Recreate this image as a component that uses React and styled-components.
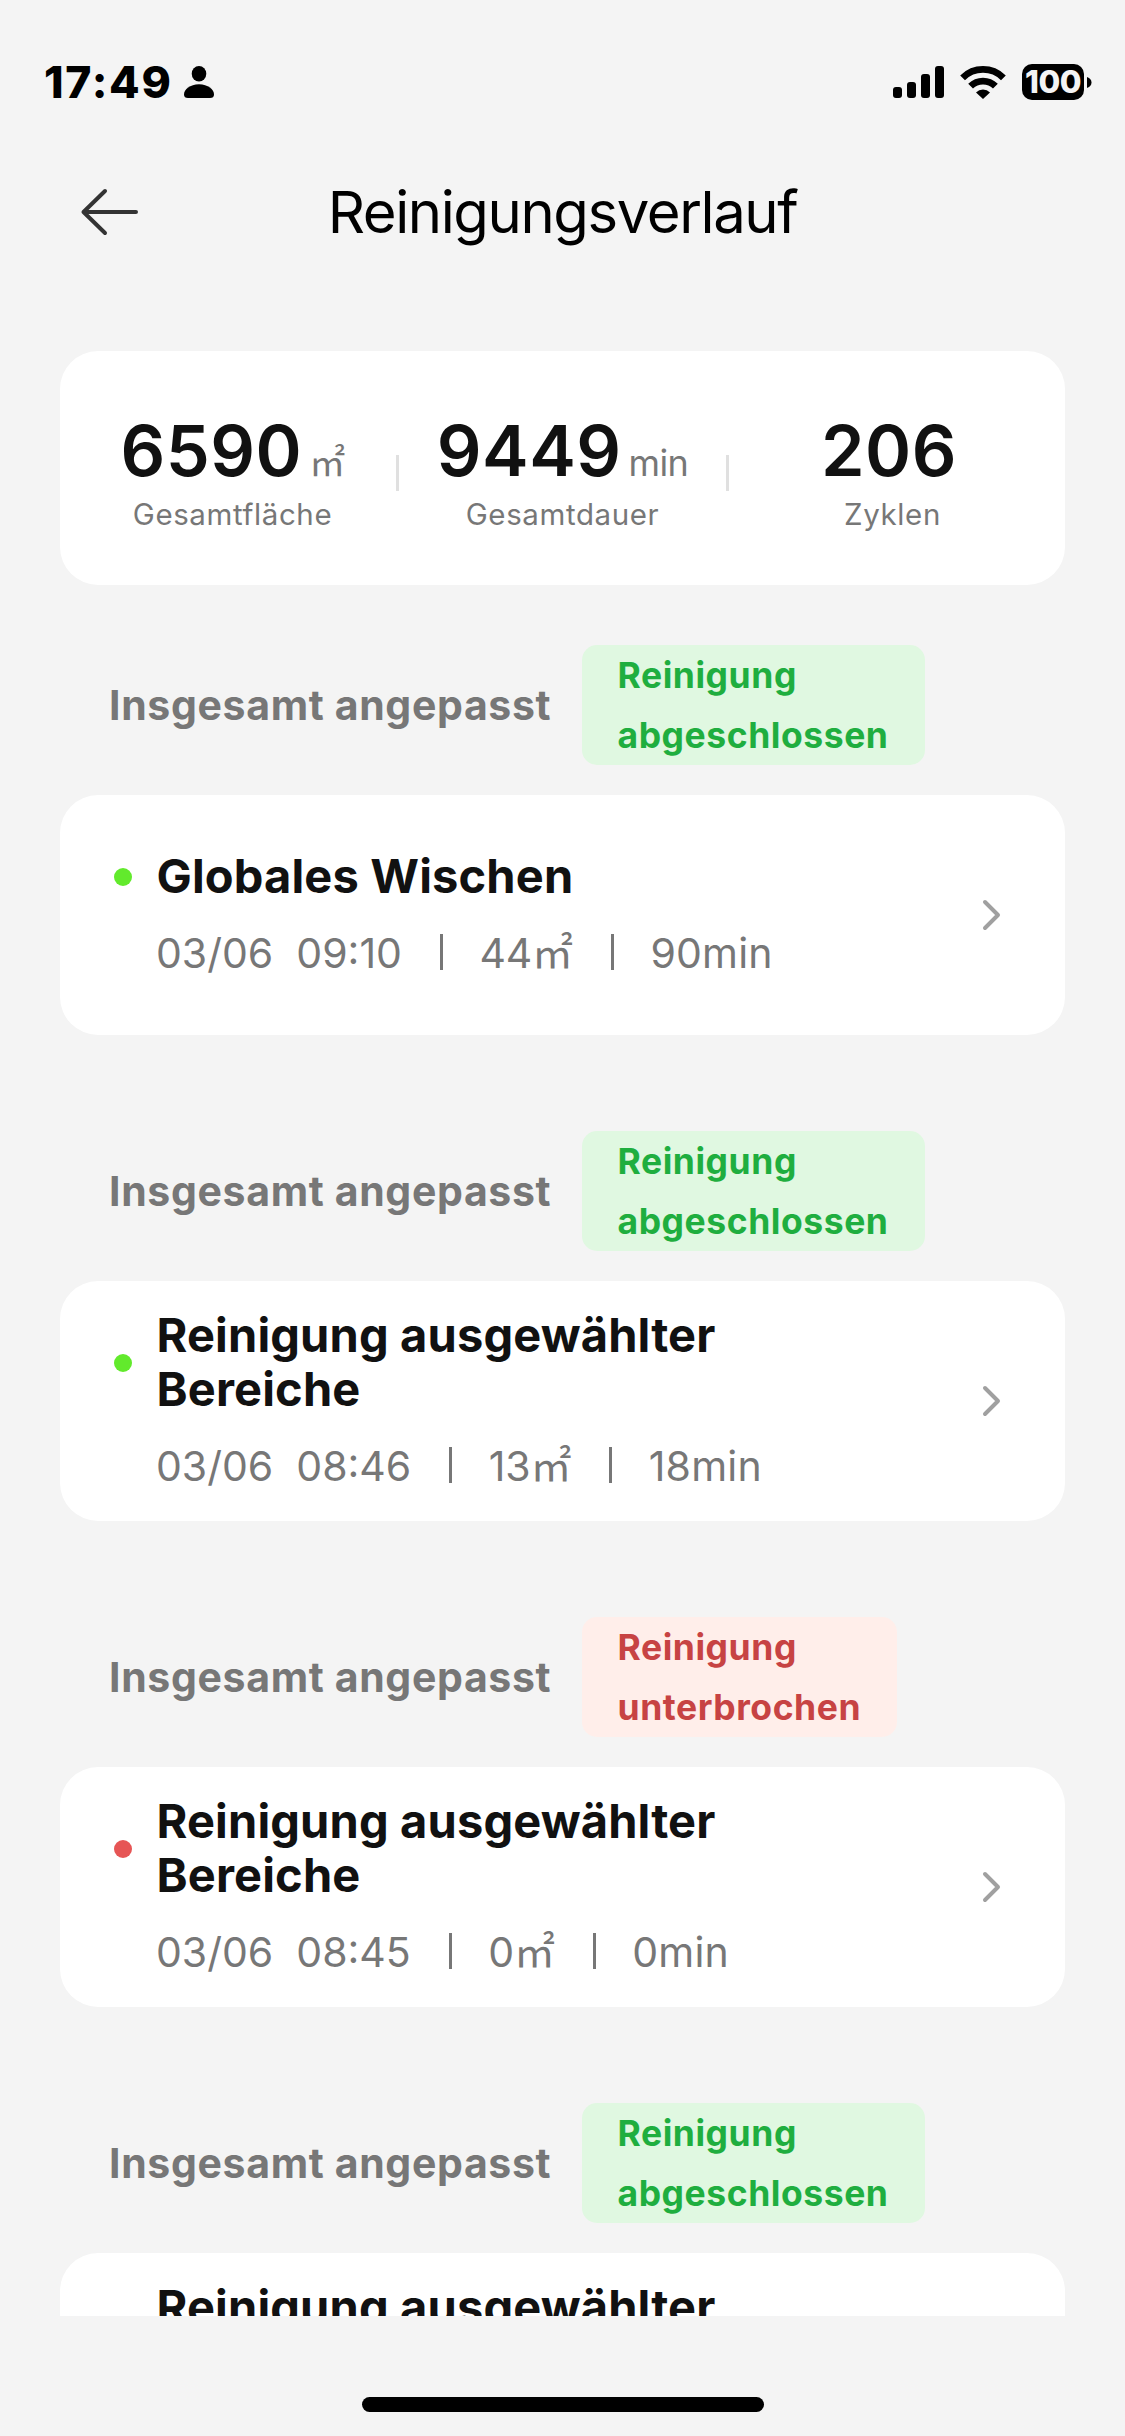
import React from 'react'
import styled, { createGlobalStyle } from 'styled-components'

const GlobalStyle = createGlobalStyle`
    * {
        box-sizing: border-box;
    }

    body {
        margin: 0;
        background-color: #f4f4f4;
        font-family: Inter, "Noto Sans CJK SC", sans-serif;
    }
`

const Screen = styled.div`
    display: flex;
    flex-direction: column;
    width: 1125px;
    height: 2436px;
    overflow: hidden;
    background-color: #f4f4f4;
`

const StatusBar = styled.div`
    display: flex;
    justify-content: space-between;
    align-items: center;
    height: 132px;
    padding: 32px 33px 0 44px;
    flex-shrink: 0;
`

const StatusGroup = styled.div`
    display: flex;
    align-items: center;
`

const Clock = styled.span`
    width: 140px;
    font-size: 44.5px;
    line-height: 50px;
    font-weight: 800;
    letter-spacing: 1.7px;
    color: #000;
`

const SignalIcon = styled.svg`
    margin-right: 16px;
`

const WifiIcon = styled.svg`
    margin-right: 16px;
`

const Battery = styled.div`
    width: 62px;
    height: 36px;
    border-radius: 10px;
    background-color: #000;
    color: #f4f4f4;
    font-size: 31.5px;
    line-height: 36px;
    font-weight: 800;
    letter-spacing: -0.5px;
    text-align: center;
    margin-right: 3px;
`

const Header = styled.header`
    display: grid;
    grid-template-columns: 120px 1fr 120px;
    align-items: center;
    height: 160px;
    padding: 0 50px;
    flex-shrink: 0;
`

const BackButton = styled.button`
    display: flex;
    justify-content: center;
    padding: 0;
    border: none;
    background: none;
`

const Title = styled.h1`
    margin: 0;
    font-size: 58px;
    line-height: 80px;
    font-weight: 400;
    letter-spacing: -1.4px;
    text-align: center;
    color: #000;
`

const Content = styled.main`
    height: 2024px;
    padding: 59px 60px 0;
    overflow: hidden;
    flex-shrink: 0;
`

const Summary = styled.div`
    display: grid;
    grid-template-columns: 327px 3px 327px 3px 327px;
    height: 234px;
    padding: 57px 9px 0;
    border-radius: 38px;
    background-color: #fff;
    margin-bottom: 60px;
`

const Stat = styled.div`
    display: flex;
    flex-direction: column;
    align-items: center;
`

const StatValue = styled.div`
    display: flex;
    align-items: baseline;
    height: 85px;
    font-size: 70px;
    line-height: 85px;
    font-weight: 620;
    letter-spacing: 0.5px;
    color: #111;
`

const StatUnit = styled.span`
    margin-left: 7px;
    font-size: 36px;
    line-height: 40px;
    font-weight: 400;
    letter-spacing: -0.6px;
    color: #777;
`

const StatLabel = styled.div`
    font-size: 29.5px;
    line-height: 43px;
    letter-spacing: 0.6px;
    color: #777;
`

const StatDivider = styled.div`
    height: 36px;
    margin-top: 47px;
    background-color: #e0e0e0;
`

const Entry = styled.section`
    margin-bottom: 96px;
`

const EntryHeader = styled.div`
    display: flex;
    align-items: center;
    height: 120px;
    padding-left: 49px;
    margin-bottom: 30px;
`

const EntryLabel = styled.span`
    width: 472.5px;
    font-size: 41px;
    line-height: 60px;
    font-weight: 650;
    letter-spacing: 0.65px;
    white-space: nowrap;
    color: #777;
`

const StatusTag = styled.span`
    width: min-content;
    height: 120px;
    padding: 1px 36px 0;
    border-radius: 15px;
    font-size: 35.5px;
    line-height: 60px;
    font-weight: 650;
    letter-spacing: 0.55px;
    color: ${props => (props.$done ? '#1fae3f' : '#c74343')};
    background-color: ${props => (props.$done ? '#e0f8e1' : '#ffeeea')};
`

const Card = styled.div`
    display: flex;
    align-items: center;
    height: 240px;
    padding: 0 62px 0 54px;
    border-radius: 38px;
    background-color: #fff;
`

const CardBody = styled.div`
    width: 700px;
    margin-right: auto;
`

const CardTitleRow = styled.div`
    display: flex;
    align-items: center;
`

const Dot = styled.i`
    width: 18px;
    height: 18px;
    border-radius: 50%;
    margin-right: 24.5px;
    flex-shrink: 0;
    background-color: ${props => (props.$done ? '#62ea2c' : '#e65555')};
`

const CardTitle = styled.h2`
    margin: -1px 0 1px;
    font-size: 47px;
    line-height: 54px;
    font-weight: 650;
    letter-spacing: 0.15px;
    color: #111;
`

const Meta = styled.div`
    display: flex;
    align-items: center;
    height: 56px;
    margin-top: 20px;
    padding-left: 42px;
    font-size: 41px;
    line-height: 56px;
    color: #777;
    white-space: pre;
`

const MetaText = styled.span`
    padding-top: 1px;
    letter-spacing: ${props => props.$spacing || '0'};
`

const MetaDivider = styled.i`
    width: 3px;
    height: 36px;
    margin: 0 36.5px 0 38px;
    background-color: #777;
`

const HomeBar = styled.div`
    width: 402px;
    height: 15px;
    margin: 81px auto 0;
    border-radius: 8px;
    background-color: #000;
`

const entries = [
    { title: 'Globales Wischen', date: '03/06', time: '09:10', area: 44, minutes: 90, done: true },
    { title: 'Reinigung ausgewählter Bereiche', date: '03/06', time: '08:46', area: 13, minutes: 18, done: true },
    { title: 'Reinigung ausgewählter Bereiche', date: '03/06', time: '08:45', area: 0, minutes: 0, done: false },
    { title: 'Reinigung ausgewählter Bereiche', date: '', time: '', area: null, minutes: null, done: true }
]

function HistoryEntry(props) {
    const { title, date, time, area, minutes, done } = props

    return (
        <Entry>
            <EntryHeader>
                <EntryLabel>Insgesamt angepasst</EntryLabel>
                <StatusTag $done={done}>
                    {done ? 'Reinigung abgeschlossen' : 'Reinigung unterbrochen'}
                </StatusTag>
            </EntryHeader>
            <Card>
                <CardBody>
                    <CardTitleRow>
                        <Dot $done={done} />
                        <CardTitle>{title}</CardTitle>
                    </CardTitleRow>
                    <Meta>
                        {date && (
                            <>
                                <MetaText>{date}  {time}</MetaText>
                                <MetaDivider />
                                <MetaText $spacing="-0.2px">{area}㎡</MetaText>
                                <MetaDivider />
                                <MetaText $spacing="0.2px">{minutes}min</MetaText>
                            </>
                        )}
                    </Meta>
                </CardBody>
                <svg width="22" height="34" viewBox="0 0 22 34" fill="none" stroke="#a0a0a0" strokeWidth="4" strokeLinecap="round" strokeLinejoin="round">
                    <path d="M4 4 L17 17 L4 30" />
                </svg>
            </Card>
        </Entry>
    )
}

export default function App() {
    return (
        <Screen>
            <GlobalStyle />
            <StatusBar>
                <StatusGroup>
                    <Clock>17:49</Clock>
                    <svg width="30" height="32" viewBox="0 0 30 32">
                        <ellipse cx="15" cy="7.8" rx="7.3" ry="7.8" />
                        <path d="M4 32 Q0 32 0 28.5 C0 23.5 6 18.3 15 18.3 C24 18.3 30 23.5 30 28.5 Q30 32 26 32 Z" />
                    </svg>
                </StatusGroup>
                <StatusGroup>
                    <SignalIcon width="51" height="32" viewBox="0 0 51 32">
                        <rect x="0" y="21" width="9" height="11" rx="3" />
                        <rect x="14" y="16" width="9" height="16" rx="3" />
                        <rect x="28" y="8" width="9" height="24" rx="3" />
                        <rect x="42" y="0" width="9" height="32" rx="3" />
                    </SignalIcon>
                    <WifiIcon width="46" height="33" viewBox="0 0 46 33">
                        <path d="M2.6 11.8 A29 29 0 0 1 43.4 11.8" fill="none" stroke="#000" strokeWidth="6.8" />
                        <path d="M10.6 20.2 A17.6 17.6 0 0 1 35.4 20.2" fill="none" stroke="#000" strokeWidth="6.8" />
                        <path d="M16 26.4 A10 10 0 0 1 30 26.4 L23 33 Z" />
                    </WifiIcon>
                    <Battery>100</Battery>
                    <svg width="5" height="11" viewBox="0 0 5 11">
                        <path d="M0 0 C3 1 4.5 3 4.5 5.5 C4.5 8 3 10 0 11 Z" />
                    </svg>
                </StatusGroup>
            </StatusBar>
            <Header>
                <BackButton>
                    <svg width="60" height="48" viewBox="0 0 60 48" fill="none" stroke="#333" strokeWidth="4" strokeLinecap="round" strokeLinejoin="round">
                        <path d="M56 24 H3.5 M25 3 L3.5 24 L25 45" />
                    </svg>
                </BackButton>
                <Title>Reinigungsverlauf</Title>
            </Header>
            <Content>
                <Summary>
                    <Stat>
                        <StatValue>6590<StatUnit>㎡</StatUnit></StatValue>
                        <StatLabel>Gesamtfläche</StatLabel>
                    </Stat>
                    <StatDivider />
                    <Stat>
                        <StatValue>9449<StatUnit>min</StatUnit></StatValue>
                        <StatLabel>Gesamtdauer</StatLabel>
                    </Stat>
                    <StatDivider />
                    <Stat>
                        <StatValue>206<StatUnit /></StatValue>
                        <StatLabel>Zyklen</StatLabel>
                    </Stat>
                </Summary>
                {entries.map((entry, index) => (
                    <HistoryEntry key={index} {...entry} />
                ))}
            </Content>
            <HomeBar />
        </Screen>
    )
}
